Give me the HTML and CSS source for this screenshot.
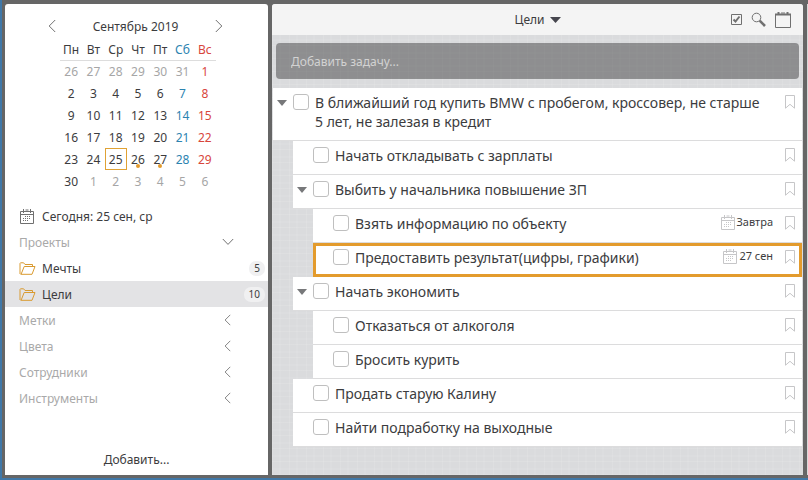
FILE: index.html
```html
<!DOCTYPE html>
<html lang="ru">
<head>
  <meta charset="utf-8">
  <title>Цели</title>
  <link rel="stylesheet" href="styles.css">
</head>
<body>

<svg class="sprite" aria-hidden="true">
  <symbol id="left" viewBox="0 0 8 14"><path d="M7.2 1 1.2 7l6 6"/></symbol>
  <symbol id="right" viewBox="0 0 8 14"><path d="M.8 1l6 6-6 6"/></symbol>
  <symbol id="down" viewBox="0 0 12 8"><path d="M.8 1 6 6.4 11.200 1"/></symbol>
  <symbol id="folder" viewBox="0 0 17 13"><path d="M1.500 12.300 H13L16 4.500H5.200L2.200 12M1 12V1.500L1.500.8H4.600L6 2.500H13.500V4.500"/></symbol>
  <symbol id="bookmark" viewBox="0 0 10 14"><path d="M.5.5h9v12.700L5 9.300.5 13.200z"/></symbol>
  <symbol id="date" viewBox="0 0 14 15">
    <path d="M.5 2.500h13v12H.5zM.5 5.500h13"/>
    <path d="M3.500 0v4M10.500 0v4M5.500 1h3" />
    <path d="M5 7.500h6M3 9.500h8M3 11.500h6" stroke-dasharray="1 1"/>
  </symbol>
</svg>

<div class="window">
  <aside class="sidebar">
    <div class="month">
      <button class="icon-btn" aria-label="Предыдущий месяц"><svg width="8" height="14"><use href="#left"/></svg></button>
      <span>Сентябрь 2019</span>
      <button class="icon-btn" aria-label="Следующий месяц"><svg width="8" height="14"><use href="#right"/></svg></button>
    </div>
    <table class="calendar">
      <thead>
        <tr><th>Пн</th><th>Вт</th><th>Ср</th><th>Чт</th><th>Пт</th><th class="sat">Сб</th><th class="sun">Вс</th></tr>
      </thead>
      <tbody>
        <tr><td class="off">26</td><td class="off">27</td><td class="off">28</td><td class="off">29</td><td class="off">30</td><td class="off">31</td><td class="sun">1</td></tr>
        <tr><td>2</td><td>3</td><td>4</td><td>5</td><td>6</td><td class="sat">7</td><td class="sun">8</td></tr>
        <tr><td>9</td><td>10</td><td>11</td><td>12</td><td>13</td><td class="sat">14</td><td class="sun">15</td></tr>
        <tr><td>16</td><td>17</td><td>18</td><td>19</td><td>20</td><td class="sat">21</td><td class="sun">22</td></tr>
        <tr><td>23</td><td>24</td><td class="today">25</td><td class="busy">26</td><td class="busy">27</td><td class="sat">28</td><td class="sun">29</td></tr>
        <tr><td>30</td><td class="off">1</td><td class="off">2</td><td class="off">3</td><td class="off">4</td><td class="off">5</td><td class="off">6</td></tr>
      </tbody>
    </table>

    <nav class="menu">
      <a class="item" href="#today"><svg class="ico-date" width="14" height="15"><use href="#date"/></svg>Сегодня: 25 сен, ср</a>
      <button class="group">Проекты<svg width="12" height="8"><use href="#down"/></svg></button>
      <a class="item" href="#dreams"><svg class="ico-folder" width="17" height="13"><use href="#folder"/></svg>Мечты<span class="count">5</span></a>
      <a class="item selected" href="#goals"><svg class="ico-folder" width="17" height="13"><use href="#folder"/></svg>Цели<span class="count">10</span></a>
      <button class="group">Метки<svg class="closed" width="7" height="12"><use href="#left"/></svg></button>
      <button class="group">Цвета<svg class="closed" width="7" height="12"><use href="#left"/></svg></button>
      <button class="group">Сотрудники<svg class="closed" width="7" height="12"><use href="#left"/></svg></button>
      <button class="group">Инструменты<svg class="closed" width="7" height="12"><use href="#left"/></svg></button>
    </nav>
    <button class="add">Добавить...</button>
  </aside>

  <main class="board">
    <header class="topbar">
      <button class="title">Цели<svg width="11" height="6" viewBox="0 0 11 6"><path d="M0 0h11L5.500 6z"/></svg></button>
      <div class="tools">
        <button class="icon-btn" aria-label="Выполненные"><svg width="11" height="11" viewBox="0 0 11 11"><path d="M.5.5h10v10H.5z"/><path d="M2.500 5.500l2 2 4-5" stroke-width="2"/></svg></button>
        <button class="icon-btn" aria-label="Поиск"><svg width="15" height="15" viewBox="0 0 15 15"><circle cx="5.500" cy="5.500" r="4.300"/><path d="M8.700 8.700l5.300 5.300" stroke-width="2.600"/></svg></button>
        <button class="icon-btn" aria-label="Календарь"><svg width="16" height="16" viewBox="0 0 16 16"><path d="M.5 2.500h15v13H.5z"/><path d="M0 2.500h16M3.500 0v3M12.500 0v3" stroke-width="2"/><path d="M6 1h4"/></svg></button>
      </div>
    </header>

    <div class="new-task">
      <input type="text" placeholder="Добавить задачу..." aria-label="Добавить задачу">
    </div>

    <ul class="tasks">
      <li class="task">
        <button class="toggle" aria-label="Свернуть"></button>
        <input type="checkbox" id="t1"><label for="t1">В ближайший год купить BMW с пробегом, кроссовер, не старше 5 лет, не залезая в кредит</label>
        <button class="mark" aria-label="Закладка"><svg width="10" height="14"><use href="#bookmark"/></svg></button>
      </li>
      <li class="task level-2">
        <input type="checkbox" id="t2"><label for="t2">Начать откладывать с зарплаты</label>
        <button class="mark" aria-label="Закладка"><svg width="10" height="14"><use href="#bookmark"/></svg></button>
      </li>
      <li class="task level-2">
        <button class="toggle" aria-label="Свернуть"></button>
        <input type="checkbox" id="t3"><label for="t3">Выбить у начальника повышение ЗП</label>
        <button class="mark" aria-label="Закладка"><svg width="10" height="14"><use href="#bookmark"/></svg></button>
      </li>
      <li class="task level-3">
        <input type="checkbox" id="t4"><label for="t4">Взять информацию по объекту</label>
        <span class="due"><svg width="14" height="15"><use href="#date"/></svg>Завтра</span>
        <button class="mark" aria-label="Закладка"><svg width="10" height="14"><use href="#bookmark"/></svg></button>
      </li>
      <li class="task level-3 current">
        <input type="checkbox" id="t5"><label for="t5">Предоставить результат(цифры, графики)</label>
        <span class="due"><svg width="14" height="15"><use href="#date"/></svg>27 сен</span>
        <button class="mark" aria-label="Закладка"><svg width="10" height="14"><use href="#bookmark"/></svg></button>
      </li>
      <li class="task level-2">
        <button class="toggle" aria-label="Свернуть"></button>
        <input type="checkbox" id="t6"><label for="t6">Начать экономить</label>
        <button class="mark" aria-label="Закладка"><svg width="10" height="14"><use href="#bookmark"/></svg></button>
      </li>
      <li class="task level-3">
        <input type="checkbox" id="t7"><label for="t7">Отказаться от алкоголя</label>
        <button class="mark" aria-label="Закладка"><svg width="10" height="14"><use href="#bookmark"/></svg></button>
      </li>
      <li class="task level-3">
        <input type="checkbox" id="t8"><label for="t8">Бросить курить</label>
        <button class="mark" aria-label="Закладка"><svg width="10" height="14"><use href="#bookmark"/></svg></button>
      </li>
      <li class="task level-2">
        <input type="checkbox" id="t9"><label for="t9">Продать старую Калину</label>
        <button class="mark" aria-label="Закладка"><svg width="10" height="14"><use href="#bookmark"/></svg></button>
      </li>
      <li class="task level-2">
        <input type="checkbox" id="t10"><label for="t10">Найти подработку на выходные</label>
        <button class="mark" aria-label="Закладка"><svg width="10" height="14"><use href="#bookmark"/></svg></button>
      </li>
    </ul>
  </main>

  <div class="edge"></div>
</div>

</body>
</html>
```

FILE: styles.css
```css
* {
  margin: 0;
  padding: 0;
  box-sizing: border-box;
}
body {
  font-family: "Noto Sans", sans-serif;
  font-size: 12px;
  color: #3c3c3e;
}
button {
  font: inherit;
  color: inherit;
  background: none;
  border: none;
  cursor: pointer;
}
svg {
  display: block;
  flex: none;
  fill: none;
  stroke: #707070;
}
.sprite {
  position: absolute;
  width: 0;
  height: 0;
}
.window {
  display: flex;
  gap: 4px;
  min-height: 100vh;
  padding: 4px 0 3px 3px;
  background-color: #666;
  border-left: 2px solid #4078a8;
  border-bottom: 2px solid #4078a8;
}
.edge {
  width: 1px;
  background-color: #d8d8d8;
}

/* Sidebar */
.sidebar {
  display: flex;
  flex-direction: column;
  flex: none;
  width: 263px;
  padding-top: 10px;
  background-color: #fff;
  border-radius: 3px 3px 0 0;
}
.month {
  display: flex;
  justify-content: space-between;
  align-items: center;
  height: 24px;
  padding: 0 45px 0 43px;
}
.calendar {
  width: 156px;
  margin: 2px 0 11px 55px;
  border-collapse: collapse;
  table-layout: fixed;
  text-align: center;
}
.calendar th {
  height: 20px;
  font-weight: normal;
  border-bottom: 1px solid #ddd;
}
.calendar td {
  position: relative;
  height: 22px;
}
.calendar .off {
  color: #a6a6a6;
}
.calendar .sat {
  color: #2c83b0;
}
.calendar .sun {
  color: #d8463c;
}
.calendar .today {
  box-shadow: inset 0 0 0 1px #e0a234;
}
.calendar .busy::after {
  content: "";
  position: absolute;
  left: 50%;
  bottom: 2px;
  width: 4px;
  height: 4px;
  margin-left: -2px;
  border-radius: 50%;
  background-color: #e39b2d;
}
.item,
.group {
  display: flex;
  align-items: center;
  width: 100%;
  height: 26px;
  padding-left: 14px;
}
.item {
  color: inherit;
  text-decoration: none;
}
.item.selected {
  background-color: #e3e3e5;
}
.ico-date {
  margin: 0 8px 0 1px;
}
.ico-folder {
  margin-right: 6px;
  stroke: #d99a30;
}
.count {
  min-width: 15px;
  margin: 0 3px 0 auto;
  padding: 0 5px;
  font-size: 10px;
  line-height: 15px;
  text-align: center;
  background-color: #f0f0f1;
  border-radius: 7px;
}
.group {
  justify-content: space-between;
  padding-right: 34px;
  color: #a9a9a9;
}
.group .closed {
  margin-right: 3px;
}
.add {
  margin-top: auto;
  height: 32px;
}

/* Task board */
.board {
  flex: 1;
  min-width: 0;
  background-color: #dadbdd;
  background-image:
    repeating-linear-gradient(90deg, rgba(255, 255, 255, 0.1) 0 1px, transparent 1px 7px, rgba(255, 255, 255, 0.06) 7px 9px, transparent 9px 17px),
    repeating-linear-gradient(0deg, rgba(255, 255, 255, 0.1) 0 1px, transparent 1px 5px, rgba(255, 255, 255, 0.06) 5px 7px, transparent 7px 13px);
  border-radius: 3px 3px 0 0;
}
.topbar {
  display: grid;
  grid-template-columns: 1fr auto 1fr;
  align-items: center;
  height: 31px;
  padding: 0 12px;
  background-color: #f4f4f4;
  border-radius: 3px 3px 0 0;
}
.title {
  grid-column: 2;
  display: flex;
  align-items: center;
  gap: 5px;
  font-size: 12px;
}
.title svg {
  fill: #46464e;
  stroke: none;
}
.tools {
  display: flex;
  justify-content: flex-end;
  align-items: center;
  gap: 9px;
}
.new-task {
  padding: 8px 4px 9px;
}
.new-task input {
  display: block;
  width: 100%;
  height: 36px;
  padding: 0 15px;
  font: inherit;
  font-size: 12px;
  color: #fff;
  background-color: rgba(0, 0, 0, 0.35);
  border: none;
  border-radius: 4px;
}
.new-task input::placeholder {
  color: #d2d2d2;
}
.tasks {
  padding: 0 1px;
  list-style: none;
}
.task {
  display: flex;
  align-items: flex-start;
  min-height: 34px;
  padding: 5px 7px 9px 20px;
  background-color: #fff;
  border-bottom: 1px solid #dcdcdd;
}
.task.level-2 {
  margin-left: 20px;
}
.task.level-3 {
  margin-left: 40px;
}
.task.current {
  outline: 3px solid #e39b2d;
  outline-offset: -3px;
}
.toggle {
  width: 20px;
  height: 16px;
  margin: 2px 0 0 -20px;
  padding-left: 4px;
}
.toggle::before {
  content: "";
  display: block;
  width: 0;
  border: 5px solid transparent;
  border-top: 6px solid #77787a;
  border-bottom: none;
}
.task input {
  flex: none;
  width: 16px;
  height: 16px;
  margin: 1px 6px 0 0;
  appearance: none;
  background-color: #fff;
  border: 1px solid #bfbfbf;
  border-radius: 3px;
}
.task label {
  flex: 1;
  padding-right: 16px;
  font-size: 14px;
  line-height: 19px;
}
.due {
  display: flex;
  align-items: center;
  gap: 2px;
  margin-right: 12px;
  font-size: 11px;
  line-height: 16px;
}
.due svg,
.mark svg {
  stroke: #c6c6c8;
}
.mark {
  margin-top: 2px;
}
```
